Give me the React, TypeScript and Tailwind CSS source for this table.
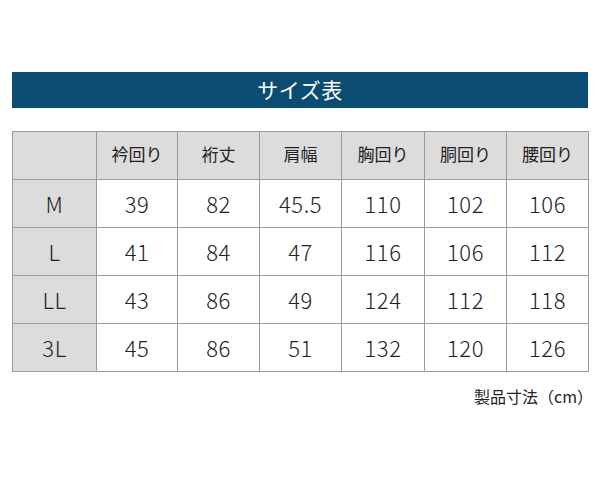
import React from 'react';

const headers = ['衿回り', '裄丈', '肩幅', '胸回り', '胴回り', '腰回り'];

const rows: { size: string; values: string[] }[] = [
  { size: 'M', values: ['39', '82', '45.5', '110', '102', '106'] },
  { size: 'L', values: ['41', '84', '47', '116', '106', '112'] },
  { size: 'LL', values: ['43', '86', '49', '124', '112', '118'] },
  { size: '3L', values: ['45', '86', '51', '132', '120', '126'] },
];

const colWidths = ['w-[84px]', 'w-[81px]', 'w-[82px]', 'w-[82px]', 'w-[83px]', 'w-[82px]', 'w-[82px]'];

const App = () => {
  return (
    <div className="w-[600px] h-[480px] bg-white pt-[72px] px-[12px] font-['Noto_Sans_CJK_JP','Noto_Sans',sans-serif] text-[#222]">
      {/* Title banner */}
      <div className="h-[36px] bg-[#0b4d72] flex items-center justify-center text-white text-[21px] tracking-wide">
        サイズ表
      </div>

      {/* Size table */}
      <table className="mt-[23px] w-[576px] border-collapse border border-[#8c8c8c] table-fixed">
        <colgroup>
          {colWidths.map((w, i) => (
            <col key={i} className={w} />
          ))}
        </colgroup>
        <thead>
          <tr className="h-[48px] bg-[#dcdcdc]">
            <th className="border border-[#9a9a9a]"></th>
            {headers.map((h) => (
              <th key={h} className="border border-[#9a9a9a] font-normal text-[17px] pb-[3px]">
                {h}
              </th>
            ))}
          </tr>
        </thead>
        <tbody>
          {rows.map((r) => (
            <tr key={r.size} className="h-[48px] font-light">
              <td className="border border-[#9a9a9a] bg-[#dcdcdc] text-center text-[22px] tracking-[0.5px]">{r.size}</td>
              {r.values.map((v, i) => (
                <td key={i} className="border border-[#9a9a9a] text-center text-[22px] tracking-[0.5px]">
                  {v}
                </td>
              ))}
            </tr>
          ))}
        </tbody>
      </table>

      <div className="mt-[12px] text-right -mr-[5px] text-[16px]">製品寸法（cm）</div>
    </div>
  );
};

export default App;
